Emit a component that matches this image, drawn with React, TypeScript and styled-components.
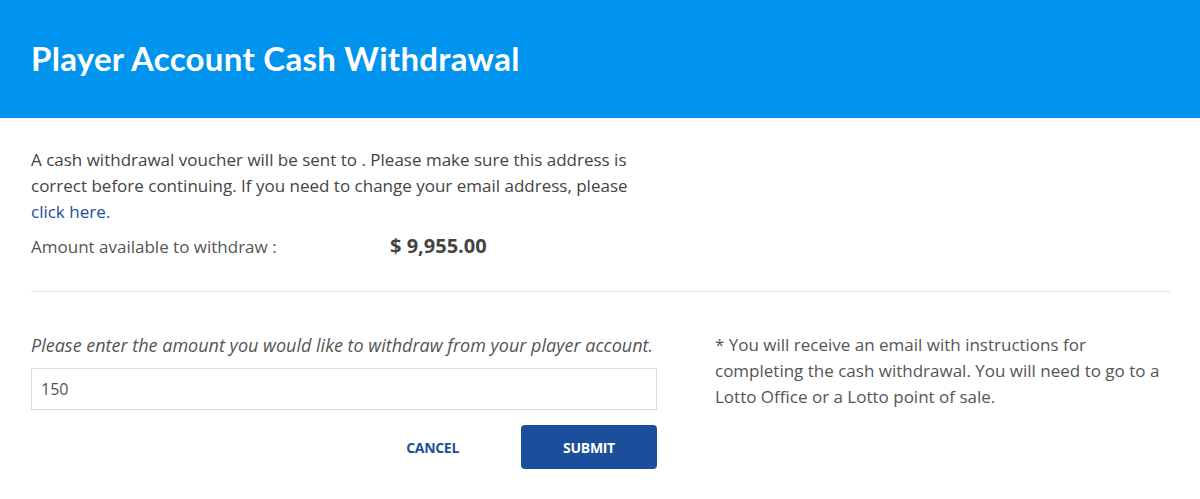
import React, { useState } from 'react';
import styled, { createGlobalStyle } from 'styled-components';

const GlobalStyle = createGlobalStyle`
  body {
    margin: 0;
    background: #ffffff;
    font-family: 'Open Sans', 'Liberation Sans', sans-serif;
    color: #555555;
  }
`;

const Header = styled.header`
  background-color: #0094ee;
  height: 118px;
  display: flex;
  align-items: center;
  padding: 0 31px 3px;
  box-sizing: border-box;
`;

const Title = styled.h1`
  margin: 0;
  color: #ffffff;
  font-family: 'Lato', 'Open Sans', sans-serif;
  font-weight: 700;
  font-size: 33px;
  letter-spacing: 0.3px;
`;

const Body = styled.main`
  padding: 0 30px 0 31px;
`;

const Intro = styled.section`
  padding-top: 29px;
  padding-bottom: 31px;
  border-bottom: 1px solid #e2e2e2;
`;

const Notice = styled.p`
  margin: 0;
  width: 606px;
  font-size: 17px;
  line-height: 26px;
  color: #444444;
  letter-spacing: 0;
`;

const Link = styled.a`
  color: #1b4f9c;
  text-decoration: none;
  cursor: pointer;
`;

const BalanceRow = styled.div`
  display: grid;
  grid-template-columns: 359px auto;
  align-items: baseline;
  line-height: 26px;
  margin-top: 8px;
`;

const BalanceLabel = styled.span`
  font-size: 17px;
  color: #555555;
`;

const BalanceValue = styled.span`
  font-size: 20px;
  font-weight: 700;
  color: #444444;
`;

const FormArea = styled.section`
  display: grid;
  grid-template-columns: 626px 1fr;
  column-gap: 58px;
  padding-top: 40px;
`;

const FormColumn = styled.div`
  display: flex;
  flex-direction: column;
`;

const Prompt = styled.label`
  font-size: 18px;
  font-style: italic;
  color: #555555;
  line-height: 26px;
  white-space: nowrap;
`;

const AmountInput = styled.input`
  margin-top: 10px;
  height: 42px;
  box-sizing: border-box;
  border: 1px solid #dcdcdc;
  padding: 0 9px;
  font-family: 'Open Sans', sans-serif;
  font-size: 16px;
  color: #555555;
  outline: none;
`;

const Actions = styled.div`
  display: flex;
  justify-content: flex-end;
  align-items: center;
  gap: 62px;
  margin-top: 15px;
`;

const Button = styled.button<{ primary?: boolean }>`
  font-family: 'Open Sans', sans-serif;
  font-weight: 700;
  font-size: 14px;
  text-transform: uppercase;
  letter-spacing: -0.3px;
  cursor: pointer;
  border: none;
  border-radius: 4px;
  height: 44px;
  width: ${p => (p.primary ? '136px' : 'auto')};
  background: ${p => (p.primary ? '#1b4f9c' : 'transparent')};
  color: ${p => (p.primary ? '#ffffff' : '#1b4f9c')};
  padding: 0;
`;

const Footnote = styled.p`
  margin: 0;
  font-size: 17px;
  line-height: 26px;
  color: #555555;
  max-width: 455px;
`;

const App: React.FC = () => {
  const [amount, setAmount] = useState('150');

  return (
    <>
      <GlobalStyle />
      <Header>
        <Title>Player Account Cash Withdrawal</Title>
      </Header>
      <Body>
        <Intro>
          <Notice>
            A cash withdrawal voucher will be sent to . Please make sure this address is
            correct before continuing. If you need to change your email address, please{' '}
            <Link>click here.</Link>
          </Notice>
          <BalanceRow>
            <BalanceLabel>Amount available to withdraw :</BalanceLabel>
            <BalanceValue>$ 9,955.00</BalanceValue>
          </BalanceRow>
        </Intro>
        <FormArea>
          <FormColumn>
            <Prompt htmlFor="amount">
              Please enter the amount you would like to withdraw from your player account.
            </Prompt>
            <AmountInput
              id="amount"
              value={amount}
              onChange={e => setAmount(e.target.value)}
            />
            <Actions>
              <Button>Cancel</Button>
              <Button primary>Submit</Button>
            </Actions>
          </FormColumn>
          <Footnote>
            * You will receive an email with instructions for completing the cash
            withdrawal. You will need to go to a Lotto Office or a Lotto point of sale.
          </Footnote>
        </FormArea>
      </Body>
    </>
  );
};

export default App;
